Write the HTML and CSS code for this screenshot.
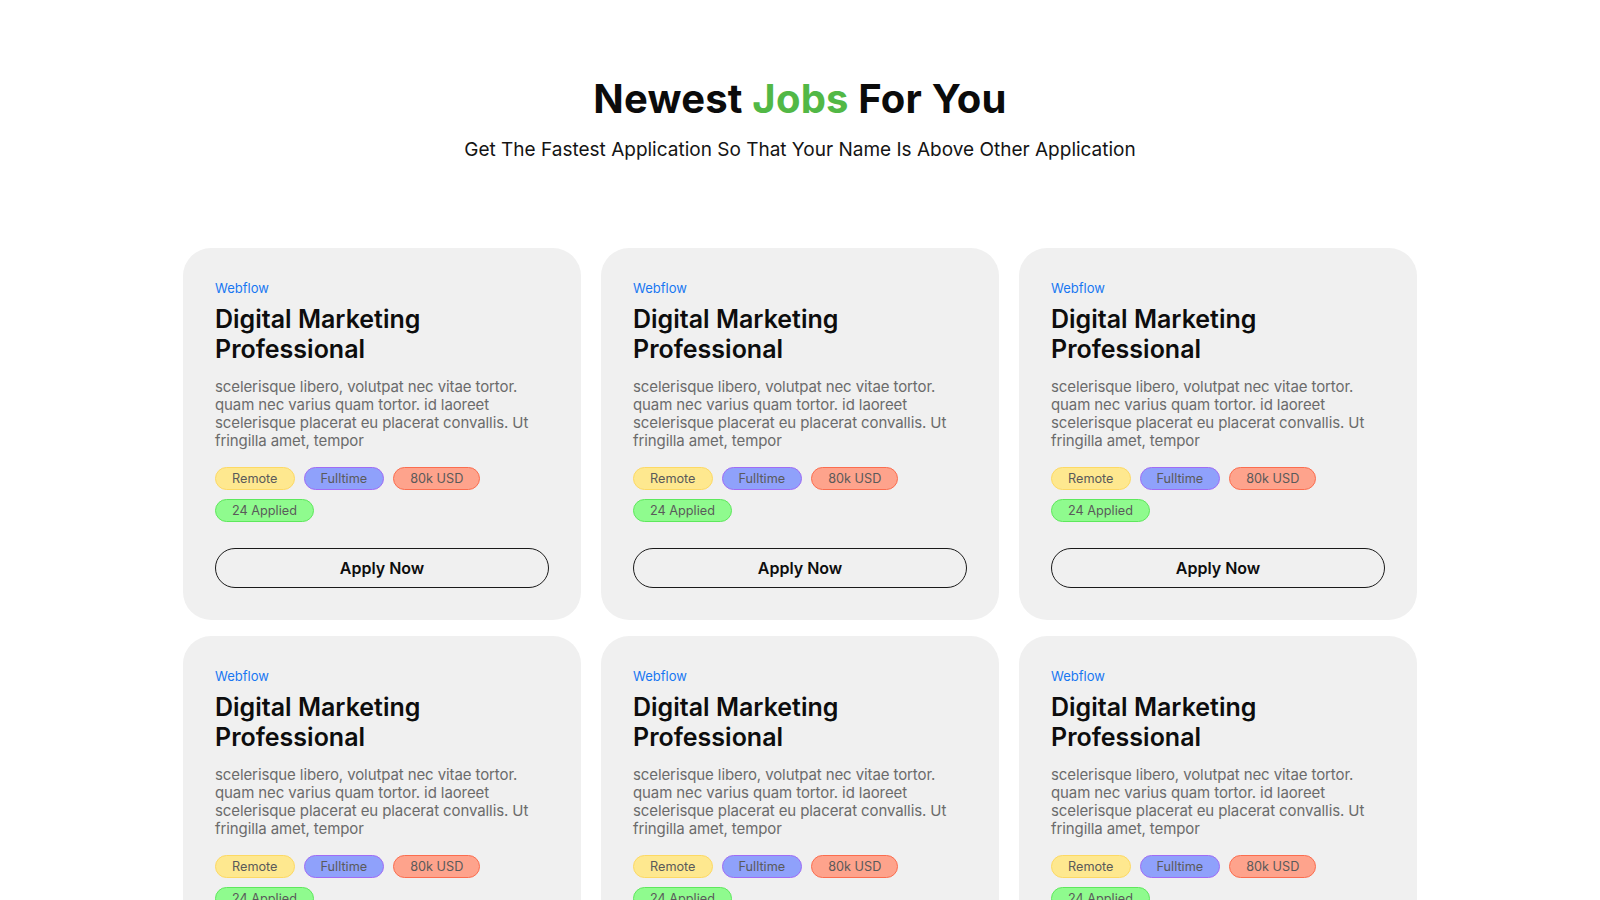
FILE: index.html
```html
<!DOCTYPE html>
<html lang="en">
<head>
<meta charset="utf-8">
<title>Newest Jobs For You</title>
<link rel="stylesheet" href="styles.css">
</head>
<body>
<section class="jobs">
  <header class="jobs-head">
    <h1 class="jobs-title">Newest <span class="accent">Jobs</span> For You</h1>
    <p class="jobs-sub">Get The Fastest Application So That Your Name Is Above Other Application</p>
  </header>
  <div class="grid">
    <article class="card">
      <div class="company">Webflow</div>
      <h2 class="role">Digital Marketing Professional</h2>
      <p class="desc">scelerisque libero, volutpat nec vitae tortor. quam nec varius quam tortor. id laoreet scelerisque placerat eu placerat convallis. Ut fringilla amet, tempor</p>
      <div class="tags">
        <span class="tag tag-remote">Remote</span>
        <span class="tag tag-full">Fulltime</span>
        <span class="tag tag-pay">80k USD</span>
        <span class="tag tag-applied">24 Applied</span>
      </div>
      <button class="apply">Apply Now</button>
    </article>
    <article class="card">
      <div class="company">Webflow</div>
      <h2 class="role">Digital Marketing Professional</h2>
      <p class="desc">scelerisque libero, volutpat nec vitae tortor. quam nec varius quam tortor. id laoreet scelerisque placerat eu placerat convallis. Ut fringilla amet, tempor</p>
      <div class="tags">
        <span class="tag tag-remote">Remote</span>
        <span class="tag tag-full">Fulltime</span>
        <span class="tag tag-pay">80k USD</span>
        <span class="tag tag-applied">24 Applied</span>
      </div>
      <button class="apply">Apply Now</button>
    </article>
    <article class="card">
      <div class="company">Webflow</div>
      <h2 class="role">Digital Marketing Professional</h2>
      <p class="desc">scelerisque libero, volutpat nec vitae tortor. quam nec varius quam tortor. id laoreet scelerisque placerat eu placerat convallis. Ut fringilla amet, tempor</p>
      <div class="tags">
        <span class="tag tag-remote">Remote</span>
        <span class="tag tag-full">Fulltime</span>
        <span class="tag tag-pay">80k USD</span>
        <span class="tag tag-applied">24 Applied</span>
      </div>
      <button class="apply">Apply Now</button>
    </article>
    <article class="card">
      <div class="company">Webflow</div>
      <h2 class="role">Digital Marketing Professional</h2>
      <p class="desc">scelerisque libero, volutpat nec vitae tortor. quam nec varius quam tortor. id laoreet scelerisque placerat eu placerat convallis. Ut fringilla amet, tempor</p>
      <div class="tags">
        <span class="tag tag-remote">Remote</span>
        <span class="tag tag-full">Fulltime</span>
        <span class="tag tag-pay">80k USD</span>
        <span class="tag tag-applied">24 Applied</span>
      </div>
      <button class="apply">Apply Now</button>
    </article>
    <article class="card">
      <div class="company">Webflow</div>
      <h2 class="role">Digital Marketing Professional</h2>
      <p class="desc">scelerisque libero, volutpat nec vitae tortor. quam nec varius quam tortor. id laoreet scelerisque placerat eu placerat convallis. Ut fringilla amet, tempor</p>
      <div class="tags">
        <span class="tag tag-remote">Remote</span>
        <span class="tag tag-full">Fulltime</span>
        <span class="tag tag-pay">80k USD</span>
        <span class="tag tag-applied">24 Applied</span>
      </div>
      <button class="apply">Apply Now</button>
    </article>
    <article class="card">
      <div class="company">Webflow</div>
      <h2 class="role">Digital Marketing Professional</h2>
      <p class="desc">scelerisque libero, volutpat nec vitae tortor. quam nec varius quam tortor. id laoreet scelerisque placerat eu placerat convallis. Ut fringilla amet, tempor</p>
      <div class="tags">
        <span class="tag tag-remote">Remote</span>
        <span class="tag tag-full">Fulltime</span>
        <span class="tag tag-pay">80k USD</span>
        <span class="tag tag-applied">24 Applied</span>
      </div>
      <button class="apply">Apply Now</button>
    </article>
  </div>
</section>
</body>
</html>
```

FILE: styles.css
```css
* { box-sizing: border-box; }

body {
  margin: 0;
  background: #ffffff;
  font-family: Inter, "Noto Sans", "Liberation Sans", sans-serif;
  color: #111;
}

.jobs {
  padding-top: 75px;
}

.jobs-head {
  text-align: center;
}

.jobs-title {
  margin: 0;
  font-size: 40px;
  font-weight: 700;
  line-height: 48px;
  letter-spacing: 0.2px;
  color: #0b0b0b;
}

.accent { color: #52b846; }

.jobs-sub {
  margin: 15px 0 0;
  font-size: 19px;
  line-height: 23px;
  color: #141414;
}

.grid {
  width: 1234px;
  margin: 87px auto 0;
  display: grid;
  grid-template-columns: repeat(3, 398px);
  column-gap: 20px;
  row-gap: 16px;
}

.card {
  background: #f0f0f0;
  border-radius: 28px;
  padding: 32px 32px 32px;
  display: flex;
  flex-direction: column;
}

.company {
  font-size: 13px;
  line-height: 16px;
  color: #1877f2;
}

.role {
  margin: 8px 0 0;
  font-size: 25px;
  font-weight: 600;
  line-height: 30px;
  color: #0d0d0d;
}

.desc {
  margin: 14px 0 0;
  font-size: 15px;
  line-height: 18px;
  letter-spacing: -0.1px;
  color: #6b6b6b;
}

.tags {
  margin-top: 17px;
  display: flex;
  flex-wrap: wrap;
  column-gap: 9px;
  row-gap: 9px;
}

.tag {
  display: inline-block;
  padding: 3px 16px;
  border: 1px solid;
  border-radius: 12px;
  font-size: 12.7px;
  line-height: 15px;
  color: #5a5a5a;
}

.tag-remote { background: #fee88f; border-color: #fdd964; }
.tag-full { background: #8fa1fb; border-color: #a06cf5; }
.tag-pay { background: #fea38c; border-color: #fb6d4f; }
.tag-applied { background: #8ffb8e; border-color: #5ee85c; }

.apply {
  margin-top: 26px;
  height: 40px;
  width: 100%;
  border: 1.5px solid #1a1a1a;
  border-radius: 20px;
  background: transparent;
  font-family: inherit;
  font-size: 16px;
  font-weight: 600;
  color: #0d0d0d;
  cursor: pointer;
}
```
